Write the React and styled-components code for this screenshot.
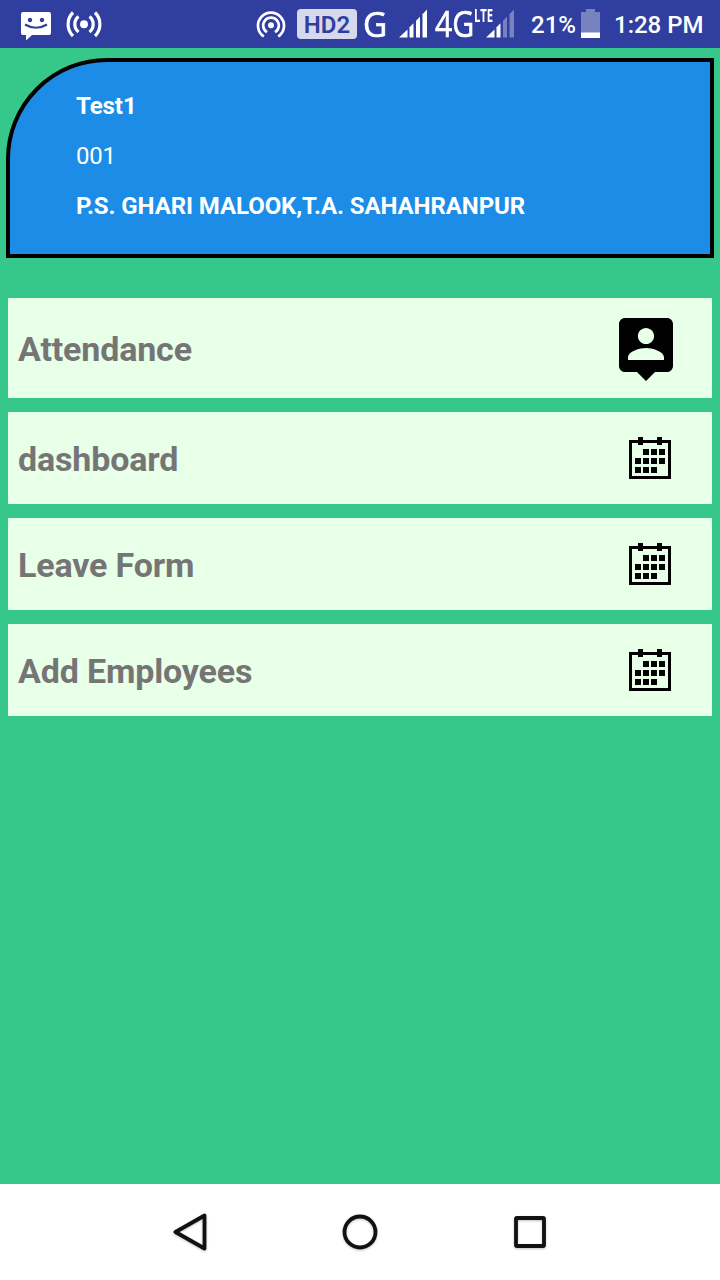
import React from "react";
import styled, { createGlobalStyle } from "styled-components";

const GlobalStyle = createGlobalStyle`
  * { box-sizing: border-box; }
  body { margin: 0; background: #36c88a; }
`;

const Screen = styled.div`
  width: 720px;
  height: 1280px;
  display: flex;
  flex-direction: column;
  background: #36c88a;
  font-family: Roboto, "Liberation Sans", sans-serif;
  overflow: hidden;
`;

const StatusBar = styled.header`
  height: 48px;
  flex: none;
  display: flex;
  align-items: center;
  background: #303f9f;
  color: #fff;
`;

const StatusSlot = styled.div`
  position: relative;
  flex: none;
  width: ${(p) => p.$width}px;
  height: 48px;
  margin-left: ${(p) => p.$gap}px;
  display: flex;
  align-items: center;
  white-space: nowrap;
  svg { display: block; }
`;

const StatusText = styled.span`
  font-size: 24px;
  font-weight: 500;
  line-height: 28px;
  padding-top: 2px;
`;

const HdBadge = styled.span`
  width: 60px;
  height: 30px;
  border-radius: 4px;
  background: #d6d9ec;
  color: #303f9f;
  font-size: 24px;
  font-weight: 600;
  line-height: 32px;
  text-align: center;
`;

const NetworkLabel = styled.span`
  font-family: "Open Sans", "Noto Sans", sans-serif;
  font-size: ${(p) => p.$size}px;
  font-weight: ${(p) => p.$weight || 400};
  line-height: 48px;
  transform-origin: left center;
  transform: scaleX(${(p) => p.$stretch || 1});
  -webkit-text-stroke: 0.7px #fff;
`;

const LteTag = styled(NetworkLabel)`
  position: absolute;
  left: -12px;
  top: 7px;
  line-height: 18px;
  -webkit-text-stroke: 0;
`;

const Content = styled.main`
  flex: 1;
  padding: 10px 6px 0;
`;

const ProfileCard = styled.section`
  height: 200px;
  padding: 19px 66px;
  border: 4px solid #000;
  border-top-left-radius: 101px;
  background: #1c8ce6;
  color: #fff;
`;

const ProfileLine = styled.p`
  margin: 0;
  height: 50px;
  font-size: 24px;
  line-height: 50px;
  font-weight: ${(p) => (p.$bold ? 700 : 400)};
  letter-spacing: ${(p) => (p.$bold ? -0.08 : -0.3)}px;
  white-space: nowrap;
`;

const Menu = styled.nav`
  margin: 40px 2px 0;
  display: flex;
  flex-direction: column;
  gap: 14px;
`;

const MenuItem = styled.div`
  height: ${(p) => (p.$tall ? 100 : 92)}px;
  padding: 0 30px 0 10px;
  display: flex;
  align-items: center;
  justify-content: space-between;
  background: #e8ffe8;
  svg { display: block; }
`;

const MenuLabel = styled.span`
  color: #757575;
  font-size: 34px;
  font-weight: 700;
  line-height: 40px;
  letter-spacing: -0.16px;
  padding-top: 1px;
`;

const NavBar = styled.footer`
  height: 96px;
  flex: none;
  display: flex;
  align-items: center;
  justify-content: center;
  gap: 122px;
  background: #fff;
  svg {
    display: block;
    filter: drop-shadow(0 1px 1px rgba(0, 0, 0, 0.25));
  }
`;

const MessageIcon = () => (
  <svg width="32" height="32" viewBox="20 8 32 32">
    <path d="M23 12H49Q51 12 51 14V33Q51 35 49 35H32L26 40.500V35H23Q21 35 21 33V14Q21 12 23 12Z" fill="#fff" />
    <circle cx="30" cy="20" r="2.200" fill="#303f9f" />
    <circle cx="42" cy="20" r="2.200" fill="#303f9f" />
    <path d="M25 24.500Q36 31 47 24.500" fill="none" stroke="#303f9f" strokeWidth="2.200" />
  </svg>
);

const BroadcastIcon = () => (
  <svg width="36" height="30" viewBox="66 9 36 30" fill="none" stroke="#fff" strokeWidth="3.200">
    <circle cx="84" cy="24.300" r="4" fill="#fff" stroke="none" />
    <path d="M78.500 16.500A10 10 0 0 0 78.500 32M89.500 16.500A10 10 0 0 1 89.500 32" />
    <path d="M73 12.500A16.500 16.500 0 0 0 73 36M95 12.500A16.500 16.500 0 0 1 95 36" />
  </svg>
);

const HotspotIcon = () => (
  <svg width="30" height="30" viewBox="256 9 30 30" fill="none" stroke="#fff" strokeWidth="2.700">
    <circle cx="271" cy="25.300" r="3" fill="#fff" stroke="none" />
    <path d="M267 32.200A7.800 7.800 0 1 1 275 32.200" />
    <path d="M263.800 36.500A13 13 0 1 1 278.200 36.500" />
  </svg>
);

const SignalIcon = ({ level }) => (
  <svg width="29" height="30" viewBox="0 0 29 30" fill="#fff">
    <path d="M0 28.500L8.500 20.500V28.500Z" />
    <path d="M10.500 18.300L14.500 14.300V28.500H10.500Z" />
    <path d="M17 11.800L21 7.700V28.500H17Z" opacity={level > 2 ? 1 : 0.35} />
    <path d="M23.500 5.200L28 0.500V28.500H23.500Z" opacity={level > 3 ? 1 : 0.35} />
  </svg>
);

const BatteryIcon = () => (
  <svg width="20" height="30" viewBox="0 0 20 30" fill="#fff">
    <path d="M5 0H14V3H19V24H0V3H5Z" opacity="0.350" />
    <path d="M0 23.500H19V29H0Z" />
  </svg>
);

const PersonPinIcon = () => (
  <svg width="72" height="72" viewBox="0 0 24 24">
    <path d="M19 2H5c-1.110 0-2 .9-2 2v14c0 1.100.89 2 2 2h4l3 3 3-3h4c1.100 0 2-.9 2-2V4c0-1.100-.9-2-2-2zm-7 3.300c1.490 0 2.700 1.210 2.700 2.700s-1.210 2.700-2.700 2.700S9.300 9.490 9.300 8s1.210-2.700 2.700-2.700zM18 16H6v-.9c0-2 4-3.100 6-3.100s6 1.100 6 3.100v.9z" />
  </svg>
);

const calendarDays = [
  [25, 23], [33, 23], [41, 23],
  [17, 32], [25, 32], [33, 32], [41, 32],
  [17, 41], [25, 41], [33, 41],
];

const CalendarIcon = () => (
  <svg width="64" height="64" viewBox="0 0 64 64">
    <rect x="12.500" y="15.500" width="39" height="36" fill="none" stroke="#000" strokeWidth="3" />
    <rect x="20" y="11" width="5" height="8" />
    <rect x="39" y="11" width="5" height="8" />
    {calendarDays.map(([x, y]) => (
      <rect key={`${x}-${y}`} x={x} y={y} width="6" height="6" />
    ))}
  </svg>
);

const NavIcon = ({ children }) => (
  <svg width="48" height="48" viewBox="0 0 48 48" fill="none" stroke="#111" strokeWidth="3.800" strokeLinejoin="round">
    {children}
  </svg>
);

const menuItems = [
  { label: "Attendance", Icon: PersonPinIcon, tall: true },
  { label: "dashboard", Icon: CalendarIcon },
  { label: "Leave Form", Icon: CalendarIcon },
  { label: "Add Employees", Icon: CalendarIcon },
];

export default function App() {
  return (
    <Screen>
      <GlobalStyle />
      <StatusBar>
        <StatusSlot $width={32} $gap={20}><MessageIcon /></StatusSlot>
        <StatusSlot $width={36} $gap={14}><BroadcastIcon /></StatusSlot>
        <StatusSlot $width={30} $gap={154}><HotspotIcon /></StatusSlot>
        <StatusSlot $width={60} $gap={11}><HdBadge>HD2</HdBadge></StatusSlot>
        <StatusSlot $width={24} $gap={6}><NetworkLabel $size={34} $stretch={0.98}>G</NetworkLabel></StatusSlot>
        <StatusSlot $width={29} $gap={12}><SignalIcon level={4} /></StatusSlot>
        <StatusSlot $width={38} $gap={7}><NetworkLabel $size={36} $stretch={0.84}>4G</NetworkLabel></StatusSlot>
        <StatusSlot $width={29} $gap={13}>
          <LteTag $size={17} $weight={700} $stretch={0.66}>LTE</LteTag>
          <SignalIcon level={2} />
        </StatusSlot>
        <StatusSlot $width={46} $gap={16}><StatusText>21%</StatusText></StatusSlot>
        <StatusSlot $width={20} $gap={4}><BatteryIcon /></StatusSlot>
        <StatusSlot $width={92} $gap={13}><StatusText>1:28 PM</StatusText></StatusSlot>
      </StatusBar>
      <Content>
        <ProfileCard>
          <ProfileLine $bold>Test1</ProfileLine>
          <ProfileLine>001</ProfileLine>
          <ProfileLine $bold>P.S. GHARI MALOOK,T.A. SAHAHRANPUR</ProfileLine>
        </ProfileCard>
        <Menu>
          {menuItems.map(({ label, Icon, tall }) => (
            <MenuItem key={label} $tall={tall}>
              <MenuLabel>{label}</MenuLabel>
              <Icon />
            </MenuItem>
          ))}
        </Menu>
      </Content>
      <NavBar>
        <NavIcon><path d="M9.500 24L38.500 7.500V40.500Z" /></NavIcon>
        <NavIcon><circle cx="24" cy="24" r="15.500" /></NavIcon>
        <NavIcon><rect x="10" y="10" width="28" height="28" rx="1" /></NavIcon>
      </NavBar>
    </Screen>
  );
}
